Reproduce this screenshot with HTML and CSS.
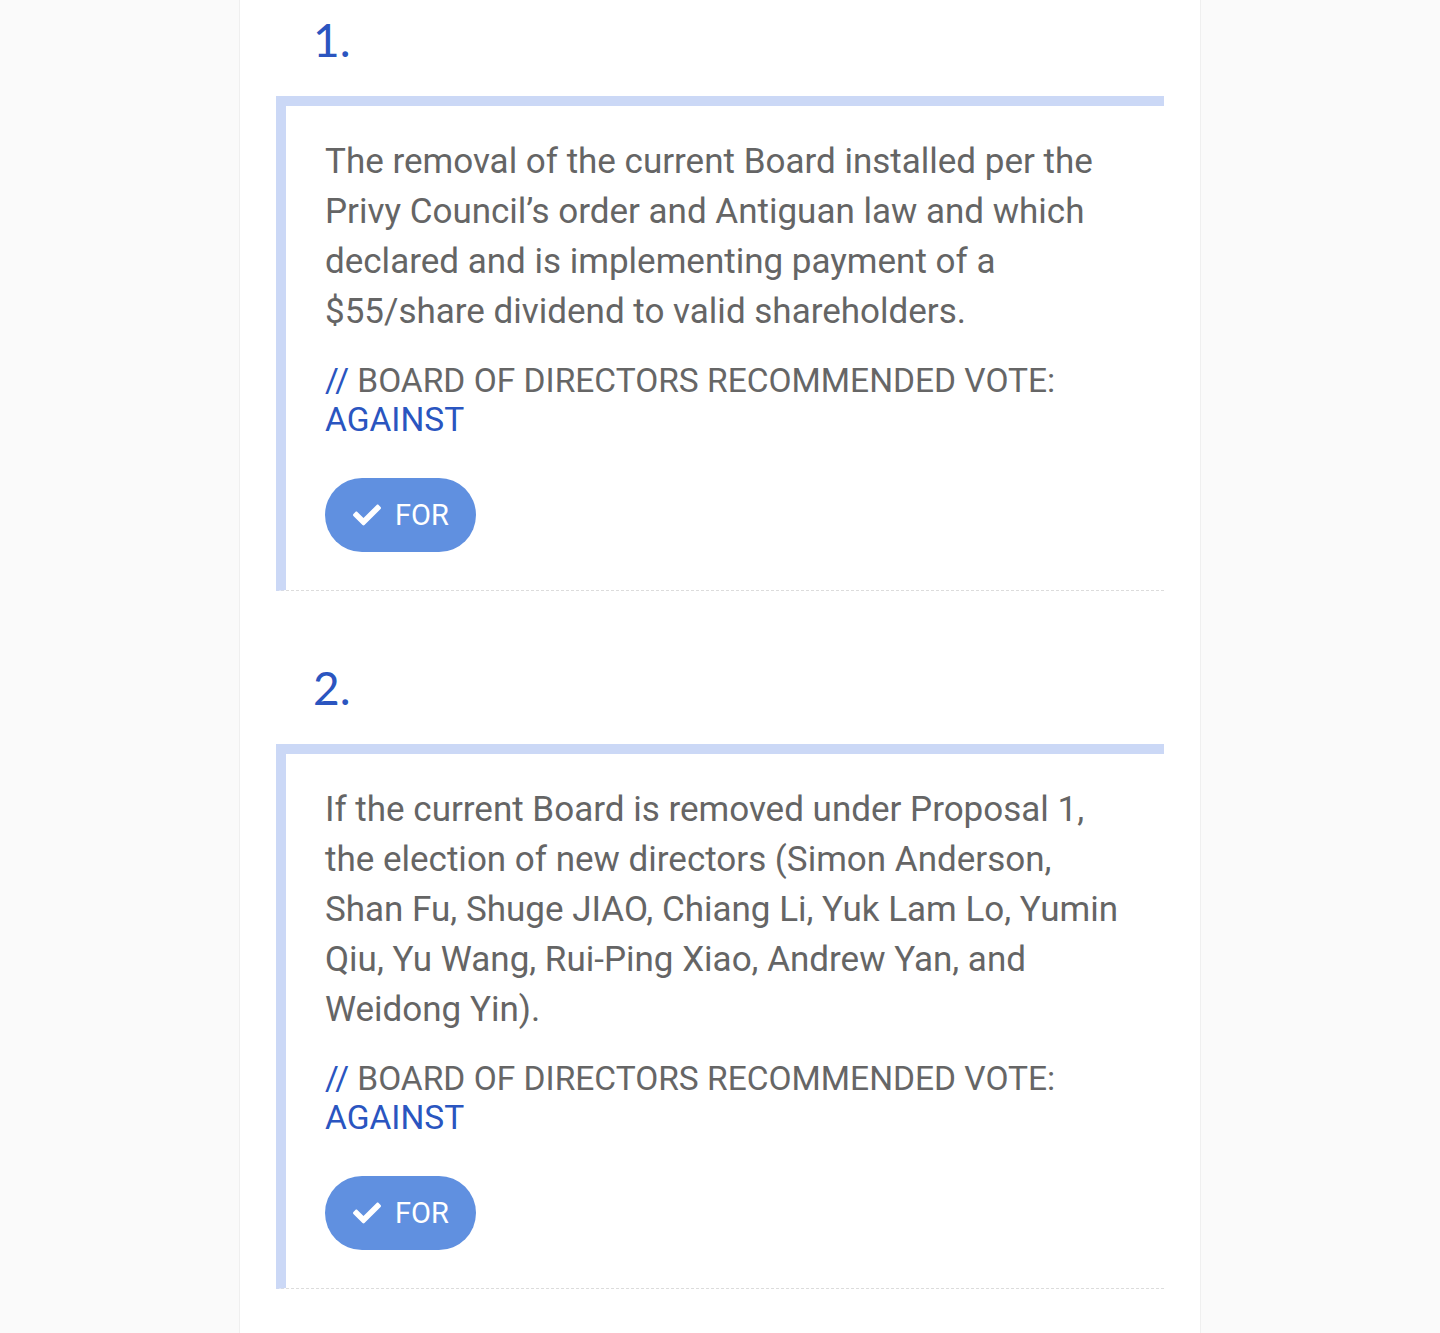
FILE: index.html
```html
<!DOCTYPE html>
<html lang="en">
<head>
<meta charset="utf-8">
<title>Proposals</title>
<link rel="stylesheet" href="styles.css">
</head>
<body>
<main class="page">
  <section class="proposal">
    <div class="num">1.</div>
    <div class="box">
      <p class="text">The removal of the current Board installed per the Privy Council’s order and Antiguan law and which declared and is implementing payment of a $55/share dividend to valid shareholders.</p>
      <p class="rec"><span class="slash">//</span> BOARD OF DIRECTORS RECOMMENDED VOTE: <span class="vote">AGAINST</span></p>
      <button class="btn" type="button">
        <svg class="check" viewBox="0 0 512 512" aria-hidden="true"><path d="M173.9 439.4l-166.4-166.4c-10-10-10-26.2 0-36.2l36.2-36.2c10-10 26.2-10 36.2 0L192 312.7 432.1 72.6c10-10 26.2-10 36.2 0l36.2 36.2c10 10 10 26.2 0 36.2l-294.4 294.4c-10 10-26.2 10-36.2 0z"/></svg>
        <span>FOR</span>
      </button>
    </div>
  </section>
  <section class="proposal">
    <div class="num">2.</div>
    <div class="box">
      <p class="text">If the current Board is removed under Proposal 1, the election of new directors (Simon Anderson, Shan Fu, Shuge JIAO, Chiang Li, Yuk Lam Lo, Yumin Qiu, Yu Wang, Rui-Ping Xiao, Andrew Yan, and Weidong Yin).</p>
      <p class="rec"><span class="slash">//</span> BOARD OF DIRECTORS RECOMMENDED VOTE: <span class="vote">AGAINST</span></p>
      <button class="btn" type="button">
        <svg class="check" viewBox="0 0 512 512" aria-hidden="true"><path d="M173.9 439.4l-166.4-166.4c-10-10-10-26.2 0-36.2l36.2-36.2c10-10 26.2-10 36.2 0L192 312.7 432.1 72.6c10-10 26.2-10 36.2 0l36.2 36.2c10 10 10 26.2 0 36.2l-294.4 294.4c-10 10-26.2 10-36.2 0z"/></svg>
        <span>FOR</span>
      </button>
    </div>
  </section>
</main>
</body>
</html>
```
FILE: styles.css
```css
html, body {
  margin: 0;
  padding: 0;
}
body {
  background: #fafafa;
  font-family: Roboto, "Liberation Sans", sans-serif;
  min-height: 1333px;
}
.page {
  box-sizing: border-box;
  width: 962px;
  margin: 0 auto;
  min-height: 1333px;
  background: #fff;
  border-left: 1px solid #efefef;
  border-right: 1px solid #efefef;
  padding: 10px 36px 0 36px;
  display: flex;
  flex-direction: column;
  gap: 67px;
}
.num {
  font-family: Lato, "DejaVu Sans", sans-serif;
  font-size: 46px;
  line-height: 60px;
  height: 60px;
  color: #2b55c0;
  margin-left: 37px;
  margin-bottom: 26px;
}
.box {
  border-top: 10px solid #cbd8f6;
  border-left: 10px solid #cbd8f6;
  border-bottom: 1px dashed #dcdcdc;
  padding: 31px 39px 38px 39px;
}
.text {
  margin: 0;
  font-size: 35px;
  line-height: 50px;
  color: #656565;
}
.rec {
  margin: 24px 0 0;
  font-size: 33.5px;
  line-height: 39px;
  color: #666;
}
.slash, .vote {
  color: #2a55c0;
}
.btn {
  margin-top: 39px;
  height: 74px;
  padding: 0 27px 0 28px;
  border: none;
  border-radius: 37px;
  background: #6090e0;
  color: #fff;
  font-family: Roboto, "Liberation Sans", sans-serif;
  font-size: 29px;
  display: inline-flex;
  align-items: center;
  gap: 14px;
}
.check {
  width: 28px;
  height: 28px;
  fill: #fff;
}
```
